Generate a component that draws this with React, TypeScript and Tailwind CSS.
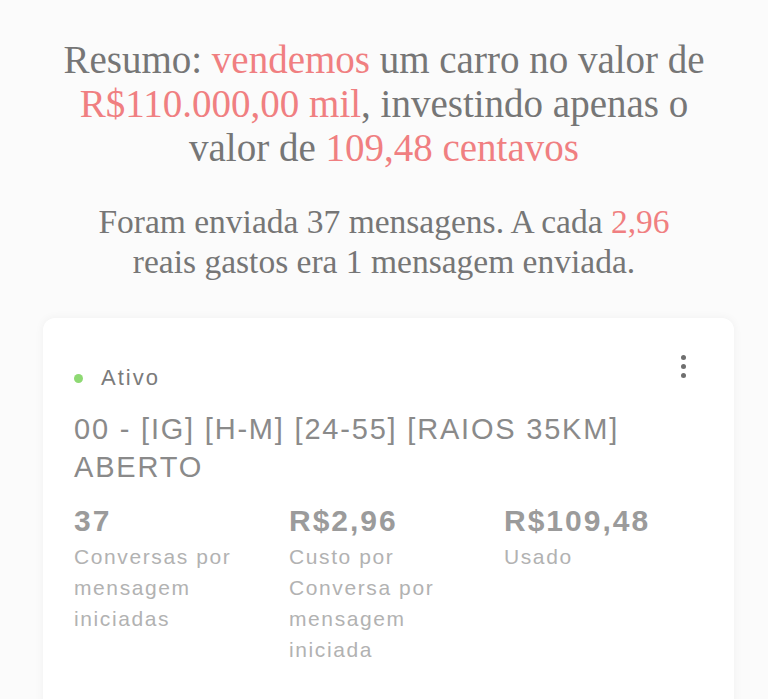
import { ReactElement } from 'react'

const stats = [
    { value: '37', label: 'Conversas por mensagem iniciadas' },
    { value: 'R$2,96', label: 'Custo por Conversa por mensagem iniciada' },
    { value: 'R$109,48', label: 'Usado' },
]

export default function App(): ReactElement {
    return (
        <div className="h-[699px] w-[768px] overflow-hidden bg-[#fbfbfb]">
            <div className="flex flex-col items-center pt-[38px] font-['Liberation_Serif',serif] text-[#767676]">
                <p className="whitespace-nowrap text-center text-[39px] leading-[44px]">
                    Resumo: <span className="text-[#f07f81]">vendemos</span> um carro no valor de
                    <br />
                    <span className="text-[#f07f81]">R$110.000,00 mil</span>, investindo apenas o
                    <br />
                    valor de <span className="text-[#f07f81]">109,48 centavos</span>
                </p>
                <p className="mt-[32px] whitespace-nowrap text-center text-[33.5px] leading-[40px]">
                    Foram enviada 37 mensagens. A cada <span className="text-[#f07f81]">2,96</span>
                    <br />
                    reais gastos era 1 mensagem enviada.
                </p>
            </div>

            <div className="ml-[43px] mr-[34px] mt-[36px] h-[420px] rounded-[12px] bg-white px-[31px] pt-[34px] font-['Liberation_Sans',sans-serif] shadow-[0_0_10px_rgba(0,0,0,0.05)]">
                <div className="flex items-start justify-between">
                    <div className="flex items-center gap-[18px] pt-[12px]">
                        <span className="h-[9px] w-[9px] rounded-full bg-[#8ed973]" />
                        <span className="text-[22px] leading-[28px] tracking-[2px] text-[#7b7b7b]">Ativo</span>
                    </div>
                    <div className="mr-[17px] flex flex-col gap-[4px] pt-[3px]">
                        <span className="h-[5px] w-[5px] rounded-full bg-[#6f6f6f]" />
                        <span className="h-[5px] w-[5px] rounded-full bg-[#6f6f6f]" />
                        <span className="h-[5px] w-[5px] rounded-full bg-[#6f6f6f]" />
                    </div>
                </div>

                <p className="mt-[18px] text-[29px] leading-[38px] tracking-[1.8px] text-[#8a8a8a]">
                    00 - [IG] [H-M] [24-55] [RAIOS 35KM]
                    <br />
                    ABERTO
                </p>

                <div className="mt-[18px] grid grid-cols-[215px_215px_1fr]">
                    {stats.map((s) => (
                        <div key={s.value} className="flex flex-col pr-[20px]">
                            <span className="text-[30px] font-bold leading-[34px] tracking-[2px] text-[#9b9b9b]">
                                {s.value}
                            </span>
                            <span className="mt-[3px] text-[21px] leading-[31px] tracking-[1.6px] text-[#b2b2b2]">
                                {s.label}
                            </span>
                        </div>
                    ))}
                </div>
            </div>
        </div>
    )
}
